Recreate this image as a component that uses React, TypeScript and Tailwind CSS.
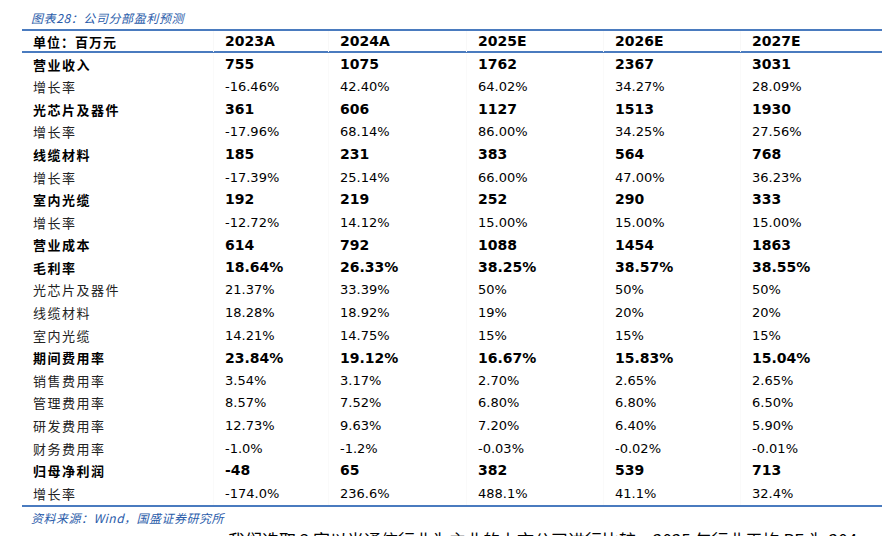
const rows: { label: string; vals: string[]; bold?: boolean }[] = [
  { label: '营业收入', vals: ['755', '1075', '1762', '2367', '3031'], bold: true },
  { label: '增长率', vals: ['-16.46%', '42.40%', '64.02%', '34.27%', '28.09%'] },
  { label: '光芯片及器件', vals: ['361', '606', '1127', '1513', '1930'], bold: true },
  { label: '增长率', vals: ['-17.96%', '68.14%', '86.00%', '34.25%', '27.56%'] },
  { label: '线缆材料', vals: ['185', '231', '383', '564', '768'], bold: true },
  { label: '增长率', vals: ['-17.39%', '25.14%', '66.00%', '47.00%', '36.23%'] },
  { label: '室内光缆', vals: ['192', '219', '252', '290', '333'], bold: true },
  { label: '增长率', vals: ['-12.72%', '14.12%', '15.00%', '15.00%', '15.00%'] },
  { label: '营业成本', vals: ['614', '792', '1088', '1454', '1863'], bold: true },
  { label: '毛利率', vals: ['18.64%', '26.33%', '38.25%', '38.57%', '38.55%'], bold: true },
  { label: '光芯片及器件', vals: ['21.37%', '33.39%', '50%', '50%', '50%'] },
  { label: '线缆材料', vals: ['18.28%', '18.92%', '19%', '20%', '20%'] },
  { label: '室内光缆', vals: ['14.21%', '14.75%', '15%', '15%', '15%'] },
  { label: '期间费用率', vals: ['23.84%', '19.12%', '16.67%', '15.83%', '15.04%'], bold: true },
  { label: '销售费用率', vals: ['3.54%', '3.17%', '2.70%', '2.65%', '2.65%'] },
  { label: '管理费用率', vals: ['8.57%', '7.52%', '6.80%', '6.80%', '6.50%'] },
  { label: '研发费用率', vals: ['12.73%', '9.63%', '7.20%', '6.40%', '5.90%'] },
  { label: '财务费用率', vals: ['-1.0%', '-1.2%', '-0.03%', '-0.02%', '-0.01%'] },
  { label: '归母净利润', vals: ['-48', '65', '382', '539', '713'], bold: true },
  { label: '增长率', vals: ['-174.0%', '236.6%', '488.1%', '41.1%', '32.4%'] },
];

const grid = 'grid grid-cols-[191px_115px_138px_137px_137px_1fr]';
const cjk = "font-['Noto_Sans_CJK_SC',sans-serif]";
const num = "font-['DejaVu_Sans','Verdana',sans-serif]";

export default function App() {
  return (
    <div className="w-[882px] h-[536px] overflow-hidden bg-white text-black">
      {/* Caption */}
      <div className={`h-[29px] pl-[31px] pt-[10px] text-[12px] leading-[16px] italic text-[#2a5caa] tracking-[0.6px] ${cjk}`}>
        图表28：公司分部盈利预测
      </div>

      <div className="ml-[22px] border-t-2 border-b-2 border-[#4a7bbf]">
        {/* Header */}
        <div className={`${grid} h-[22px] items-center border-b-2 border-[#4a7bbf]`}>
          <div className={`pl-[11px] text-[13px] font-bold tracking-[1px] ${cjk}`}>单位：百万元</div>
          {['2023A', '2024A', '2025E', '2026E', '2027E'].map((y) => (
            <div key={y} className={`h-full flex items-center pl-[11px] border-l border-[#f8f8f8] text-[14px] font-bold ${num}`}>
              {y}
            </div>
          ))}
        </div>

        {/* Body */}
        {rows.map((r, i) => (
          <div key={i} className={`${grid} h-[22.6px] items-center`}>
            <div className={`pl-[11px] text-[13px] tracking-[1.5px] ${r.bold ? 'font-bold' : 'font-normal text-[#222]'} ${cjk}`}>
              {r.label}
            </div>
            {r.vals.map((v, j) => (
              <div
                key={j}
                className={`h-full flex items-center pl-[11px] border-l border-[#fafafa] ${r.bold ? 'text-[14px] font-bold' : 'text-[13px]'} ${num}`}
              >
                {v}
              </div>
            ))}
          </div>
        ))}
      </div>

      {/* Source */}
      <div className={`pl-[31px] pt-[3px] text-[12px] leading-[16px] italic text-[#2a5caa] tracking-[0.5px] ${cjk}`}>
        资料来源：Wind，国盛证券研究所
      </div>

      {/* Body text, cut off at the bottom as in the page */}
      <div className={`pl-[228px] pt-[3px] text-[17px] leading-[22px] whitespace-nowrap ${cjk}`}>
        我们选取 3 家以光通信行业为主业的上市公司进行比较，2025 年行业平均 PE 为 204x
      </div>
    </div>
  );
}
